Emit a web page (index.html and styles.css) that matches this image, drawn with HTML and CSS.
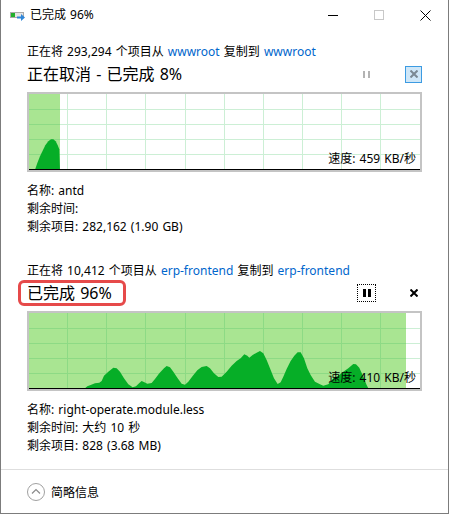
FILE: index.html
```html
<!DOCTYPE html>
<html lang="zh-CN">
<head>
<meta charset="UTF-8">
<meta name="viewport" content="width=device-width, initial-scale=1.0">
<title>已完成 96%</title>
<link rel="stylesheet" href="styles.css">
</head>
<body>
<div class="window">
    <div class="titlebar">
        <svg class="app-icon" width="16" height="16" viewBox="0 0 16 16">
            <rect x="1.5" y="5.5" width="13" height="5" fill="#e4e4e4" stroke="#a9a9a9"/>
            <rect x="2" y="6" width="4" height="4" fill="#22b02a"/>
            <path d="M8 9.5h4V7l4 3.5-4 3.5v-2.5H8z" fill="#2f86d8"/>
        </svg>
        <span class="title">已完成 96%</span>
        <div class="caption">
            <span class="cap-btn"><svg width="10" height="10" viewBox="0 0 10 10"><path d="M0 5.5H10" stroke="#000"/></svg></span>
            <span class="cap-btn"><svg width="10" height="10" viewBox="0 0 10 10"><rect x="0.5" y="0.5" width="9" height="9" fill="none" stroke="#c8c8c8"/></svg></span>
            <span class="cap-btn"><svg width="11" height="11" viewBox="0 0 11 11"><path d="M0.5 0.5L10.5 10.5M10.5 0.5L0.5 10.5" stroke="#000"/></svg></span>
        </div>
    </div>

    <div class="content">
        <!-- 第一个任务：正在取消 -->
        <div class="job">
            <div class="summary">正在将 293,294 个项目从 <a class="link">wwwroot</a> 复制到 <a class="link">wwwroot</a></div>
            <div class="status-row">
                <span class="status">正在取消 - 已完成 8%</span>
                <div class="job-buttons">
                    <span class="pause-btn disabled"><i></i><i></i></span>
                    <span class="stop-btn hover">
                        <svg width="8" height="8" viewBox="0 0 8 8"><path d="M0.5 0.5L7.5 7.5M7.5 0.5L0.5 7.5" stroke="#7b8994" stroke-width="2"/></svg>
                    </span>
                </div>
            </div>
            <div class="chart">
                <svg width="391" height="76" viewBox="0 0 391 76">
                    <path d="M38.5 0V76M77.5 0V76M116.5 0V76M156.5 0V76M195.5 0V76M234.5 0V76M273.5 0V76M312.5 0V76M351.5 0V76M0 15.5H391M0 30.5H391M0 45.5H391M0 60.5H391" stroke="#ccefd5"/>
                    <rect width="31" height="76" fill="#a9e592"/>
                    <path d="M0 15.5H31M0 30.5H31M0 45.5H31M0 60.5H31" stroke="#8dda85"/>
                    <path transform="scale(0.3333) translate(-27 -18)" fill="#06ae27"
                          d="M45 245L52 225L60 205L68 188L76 172L85 160L93 154L100 154L107 160L113 172L118 184L120 245Z"/>
                    <path d="M0 75.5H391" stroke="#000"/>
                </svg>
                <span class="speed">速度: 459 KB/秒</span>
            </div>
            <div class="details">
                <div>名称: antd</div>
                <div>剩余时间:</div>
                <div>剩余项目: 282,162 (1.90 GB)</div>
            </div>
        </div>

        <!-- 第二个任务：正在复制 -->
        <div class="job second">
            <div class="summary">正在将 10,412 个项目从 <a class="link">erp-frontend</a> 复制到 <a class="link">erp-frontend</a></div>
            <div class="status-row">
                <span class="status"><span class="mark">已完成 96%</span></span>
                <div class="job-buttons">
                    <span class="pause-btn focused"><i></i><i></i></span>
                    <span class="stop-btn">
                        <svg width="8" height="8" viewBox="0 0 8 8"><path d="M0.5 0.5L7.5 7.5M7.5 0.5L0.5 7.5" stroke="#000" stroke-width="2"/></svg>
                    </span>
                </div>
            </div>
            <div class="chart">
                <svg width="391" height="76" viewBox="0 0 391 76">
                    <path d="M0 15.5H391M0 30.5H391M0 45.5H391M0 60.5H391" stroke="#ccefd5"/>
                    <rect width="377" height="76" fill="#a9e592"/>
                    <path d="M38.5 0V76M77.5 0V76M116.5 0V76M156.5 0V76M195.5 0V76M234.5 0V76M273.5 0V76M312.5 0V76M351.5 0V76M0 15.5H377M0 30.5H377M0 45.5H377M0 60.5H377" stroke="#8dda85"/>
                    <path transform="scale(0.3333) translate(-87 -24)" fill="#06ae27"
                          d="M255 250L262 244L272 240L285 235L298 233L305 228L312 212L325 200L340 188L350 190L360 200L372 220L385 238L398 247L408 244L418 234L425 228L433 232L442 236L455 234L465 222L478 205L492 190L500 183L510 187L520 200L532 218L545 236L555 239L565 230L578 213L592 196L605 186L620 183L630 190L642 205L655 216L665 215L680 200L695 182L710 168L722 160L733 148L742 152L748 158L758 150L770 143L780 138L790 145L800 165L810 190L822 220L833 237L842 232L850 215L860 192L872 168L883 152L893 142L902 142L912 160L922 190L932 210L945 230L960 238L970 242L985 238L1000 220L1015 212L1030 200L1045 190L1060 177L1068 178L1078 188L1090 215L1100 240L1105 250Z"/>
                    <path d="M0 75.5H391" stroke="#000"/>
                </svg>
                <span class="speed">速度: 410 KB/秒</span>
            </div>
            <div class="details">
                <div>名称: right-operate.module.less</div>
                <div>剩余时间: 大约 10 秒</div>
                <div>剩余项目: 828 (3.68 MB)</div>
            </div>
        </div>
    </div>

    <div class="footer">
        <svg class="chevron" width="18" height="18" viewBox="0 0 18 18">
            <circle cx="9" cy="9" r="8.5" fill="none" stroke="#a0a0a0"/>
            <path d="M5 10.5L9 6.5L13 10.5" fill="none" stroke="#8a8a8a" stroke-width="1.2"/>
        </svg>
        <span>简略信息</span>
    </div>
</div>
</body>
</html>
```

FILE: styles.css
```css
body {
    margin: 0;
    font-family: "Noto Sans", "Noto Sans CJK SC", sans-serif;
    font-size: 12px;
    word-spacing: 1px;
    color: #000;
    background-color: #ffffff;
}
.window {
    width: 449px;
    height: 514px;
    box-sizing: border-box;
    border: 1px solid #7c7c7c;
    border-top: none;
    display: flex;
    flex-direction: column;
    background-color: #ffffff;
}

/* 标题栏 */
.titlebar {
    height: 30px;
    display: flex;
    align-items: center;
    padding-left: 8px;
}
.app-icon {
    margin-right: 5px;
}
.title {
    line-height: 16px;
}
.caption {
    margin-left: auto;
    display: flex;
    height: 30px;
}
.cap-btn {
    width: 46px;
    display: flex;
    align-items: center;
    justify-content: center;
}

/* 内容 */
.content {
    flex: 1;
    padding: 13px 26px 0 26px;
}
.job.second {
    margin-top: 26px;
}
.summary {
    line-height: 18px;
    white-space: nowrap;
}
.link {
    color: #0066cc;
    text-decoration: none;
}
.status-row {
    margin-top: 2px;
    height: 22px;
    display: flex;
    align-items: center;
}
.status {
    font-size: 16px;
    line-height: 22px;
}
.mark {
    display: inline-block;
    border: 3px solid #e64a4a;
    border-radius: 6px;
    line-height: 20px;
    padding: 0 11px 0 6px;
    margin: -2px 0 -2px -9px;
}
.job-buttons {
    margin-left: auto;
    display: flex;
    align-items: center;
    gap: 29px;
}
.pause-btn {
    width: 19px;
    height: 18px;
    box-sizing: border-box;
    display: flex;
    align-items: center;
    justify-content: center;
    gap: 3px;
}
.pause-btn i {
    display: block;
    width: 2px;
    height: 7px;
    background-color: #b3b3b3;
}
.pause-btn.focused {
    border: 1px dotted #000;
    gap: 2px;
}
.pause-btn.focused i {
    width: 3px;
    height: 8px;
    background-color: #000;
}
.stop-btn {
    width: 17px;
    height: 17px;
    box-sizing: border-box;
    display: flex;
    align-items: center;
    justify-content: center;
}
.stop-btn.hover {
    border: 1px solid #3c9be2;
    background-color: #cfe7f8;
}

/* 速度图 */
.chart {
    position: relative;
    margin-top: 7px;
    width: 391px;
    height: 76px;
    border: 2px solid #c4c4c4;
}
.chart svg {
    display: block;
}
.speed {
    position: absolute;
    right: 4px;
    bottom: 3px;
    line-height: 16px;
}
.details {
    margin-top: 10px;
    line-height: 18px;
}

/* 底部 */
.footer {
    height: 43px;
    border-top: 1px solid #dedede;
    display: flex;
    align-items: center;
    padding-left: 26px;
}
.chevron {
    margin-right: 6px;
}
```
